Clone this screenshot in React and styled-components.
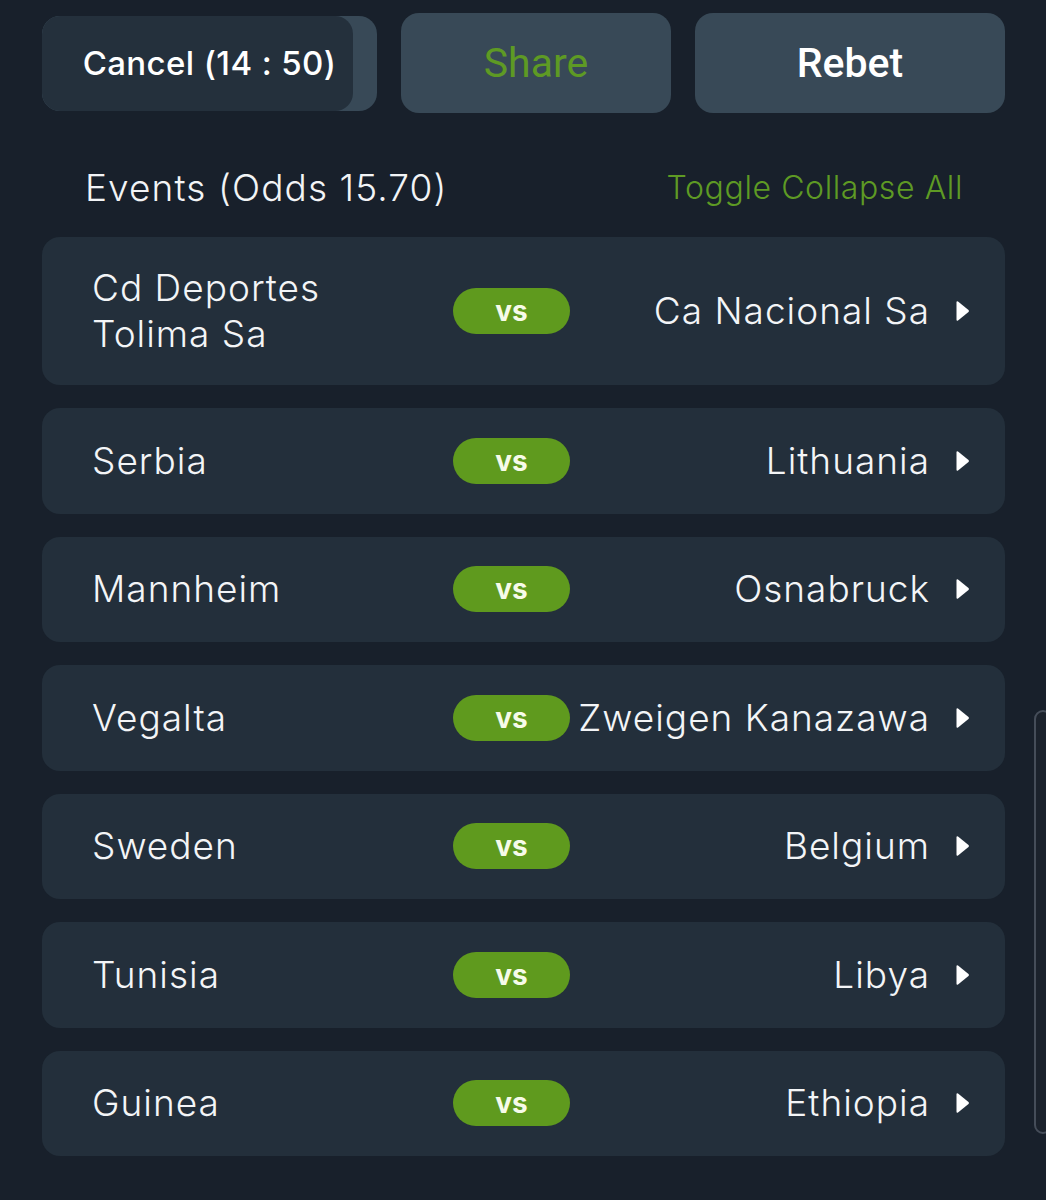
import React from 'react';
import styled, { createGlobalStyle } from 'styled-components';

const GlobalStyle = createGlobalStyle`
  html, body {
    margin: 0;
    padding: 0;
    background: #18202b;
  }
  body {
    font-family: Inter, "Noto Sans", sans-serif;
    color: #ffffff;
  }
`;

const Page = styled.div`
  min-height: 1200px;
  padding: 13px 41px 40px 42px;
  box-sizing: border-box;
`;

const Toolbar = styled.div`
  display: flex;
  align-items: center;
  gap: 24px;
`;

const ActionButton = styled.button`
  position: relative;
  overflow: hidden;
  width: ${p => p.w}px;
  height: ${p => p.h || 100}px;
  flex: none;
  border: none;
  border-radius: 18px;
  background: #384957;
  color: ${p => (p.green ? '#5e9a24' : '#ffffff')};
  font-family: ${p => p.font || 'Roboto'}, sans-serif;
  font-size: ${p => p.size || 41}px;
  font-weight: ${p => p.weight || 500};
  letter-spacing: ${p => p.spacing || 0}px;
  cursor: pointer;
  padding: 0;
`;

const Progress = styled.span`
  position: absolute;
  left: 0;
  top: 0;
  bottom: 0;
  background: #24303c;
  border-radius: 18px;
`;

const Label = styled.span`
  position: relative;
`;

const Header = styled.div`
  display: flex;
  justify-content: space-between;
  align-items: center;
  padding: 55px 42px 29px 43px;
  line-height: 40px;
`;

const Title = styled.div`
  font-size: 37px;
  font-weight: 300;
  letter-spacing: 1.1px;
  color: #f2f4f6;
`;

const Toggle = styled.div`
  font-size: 32px;
  color: #5e9a24;
  font-weight: 300;
  letter-spacing: 0.6px;
`;

const List = styled.div`
  display: flex;
  flex-direction: column;
  gap: 23px;
`;

const Row = styled.div`
  display: grid;
  grid-template-columns: 361px 117px 1fr auto;
  align-items: center;
  background: #232f3b;
  border-radius: 18px;
  padding: 28px 35px 28px 50px;
  min-height: 105.5px;
  box-sizing: border-box;
`;

const Team = styled.div`
  font-size: 37px;
  line-height: 46px;
  font-weight: 300;
  letter-spacing: 1px;
  color: #f3f5f7;
  text-align: ${p => (p.right ? 'right' : 'left')};
  padding-right: ${p => (p.right ? '0' : '40px')};
  white-space: ${p => (p.right ? 'nowrap' : 'normal')};
`;

const Vs = styled.div`
  height: 46px;
  border-radius: 23px;
  background: #5f9a1e;
  display: flex;
  align-items: center;
  justify-content: center;
  font-size: 28px;
  font-weight: 700;
  color: #f6fbe9;
`;

const Arrow = styled.svg`
  width: 14px;
  height: 22px;
  margin-left: 26px;
  display: block;
`;

const ScrollThumb = styled.div`
  position: fixed;
  right: -6px;
  top: 710px;
  width: 14px;
  height: 420px;
  border: 2px solid #454d59;
  border-radius: 10px;
  background: #1b222c;
`;

const events = [
  ['Cd Deportes Tolima Sa', 'Ca Nacional Sa'],
  ['Serbia', 'Lithuania'],
  ['Mannheim', 'Osnabruck'],
  ['Vegalta', 'Zweigen Kanazawa'],
  ['Sweden', 'Belgium'],
  ['Tunisia', 'Libya'],
  ['Guinea', 'Ethiopia'],
];

export default function App() {
  return (
    <>
      <GlobalStyle />
      <Page>
        <Toolbar>
          <ActionButton w={335} h={95} size={33} font="Inter" weight={500} spacing={0.4}>
            <Progress style={{ width: `${(311 / 335) * 100}%` }} />
            <Label>Cancel (14 : 50)</Label>
          </ActionButton>
          <ActionButton w={270} green weight={400}>Share</ActionButton>
          <ActionButton w={310} weight={500}>Rebet</ActionButton>
        </Toolbar>
        <Header>
          <Title>Events (Odds 15.70)</Title>
          <Toggle>Toggle Collapse All</Toggle>
        </Header>
        <List>
          {events.map(([home, away]) => (
            <Row key={home}>
              <Team>{home}</Team>
              <Vs>vs</Vs>
              <Team right>{away}</Team>
              <Arrow viewBox="0 0 14 22">
                <path d="M2 1.5 L12.5 10 Q13.5 11 12.5 12 L2 20.5 Q0.5 21.5 0.5 19.5 V2.5 Q0.5 0.5 2 1.5 Z" fill="#ffffff" />
              </Arrow>
            </Row>
          ))}
        </List>
        <ScrollThumb />
      </Page>
    </>
  );
}
